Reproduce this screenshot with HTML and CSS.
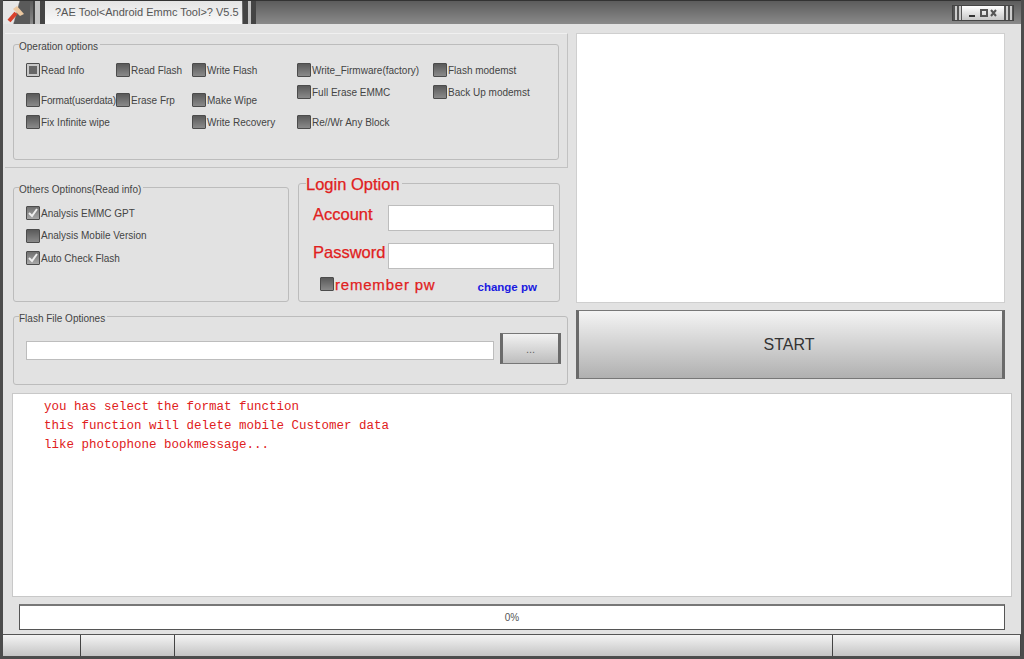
FILE: index.html
```html
<!DOCTYPE html>
<html lang="en">

<head>
    <meta charset="UTF-8">
    <title>AE Tool</title>
    <link rel="stylesheet" href="styles.css">
</head>

<body>
    <div class="window">

        <div class="titlebar">
            <div class="app-icon">
                <svg width="27" height="23" viewBox="0 0 27 23">
                    <path d="M6 20 L13 12" stroke="#d8402a" stroke-width="4" fill="none" />
                    <path d="M10 8 L14 5 L21 13 L17 15 Z" fill="#ecc8a0" />
                </svg>
            </div>
            <div class="stripes"></div>
            <div class="title-tab">?AE Tool&lt;Android Emmc Tool&gt;? V5.5</div>
            <div class="stripes after"></div>
            <div class="win-buttons">
                <div class="stripes small"></div>
                <div class="win-icons">
                    <svg width="34" height="12" viewBox="0 0 34 12">
                        <rect x="3" y="8" width="6" height="2" fill="#333" />
                        <rect x="15" y="3" width="6" height="6" fill="none" stroke="#555" stroke-width="2" />
                        <path d="M25 3 L30 9 M30 3 L25 9" stroke="#555" stroke-width="2" />
                    </svg>
                </div>
                <div class="stripes small"></div>
            </div>
        </div>

        <div class="content">
            <div class="top">
                <div class="left">
                    <div class="op-panel">
                        <div class="group op-group">
                            <span class="legend">Operation options</span>
                            <div class="op-col col1">
                                <label class="opt"><i class="box radio"></i>Read Info</label>
                                <label class="opt squeeze"><i class="box"></i>Format(userdata)</label>
                                <label class="opt"><i class="box"></i>Fix Infinite wipe</label>
                            </div>
                            <div class="op-col col2">
                                <label class="opt"><i class="box"></i>Read Flash</label>
                                <label class="opt"><i class="box"></i>Erase Frp</label>
                            </div>
                            <div class="op-col col3">
                                <label class="opt"><i class="box"></i>Write Flash</label>
                                <label class="opt"><i class="box"></i>Make Wipe</label>
                                <label class="opt"><i class="box"></i>Write Recovery</label>
                            </div>
                            <div class="op-col col4 tight">
                                <label class="opt"><i class="box"></i>Write_Firmware(factory)</label>
                                <label class="opt"><i class="box"></i>Full Erase EMMC</label>
                                <label class="opt"><i class="box"></i>Re//Wr Any Block</label>
                            </div>
                            <div class="op-col col5 tight">
                                <label class="opt"><i class="box"></i>Flash modemst</label>
                                <label class="opt"><i class="box"></i>Back Up modemst</label>
                            </div>
                        </div>
                    </div>

                    <div class="mid-row">
                        <div class="group others-group">
                            <span class="legend">Others Optinons(Read info)</span>
                            <label class="opt"><i class="box checked"><svg width="12" height="12" viewBox="0 0 12 12"><path d="M2 6 L5 9 L10 2" stroke="#eee" stroke-width="2" fill="none" /></svg></i>Analysis EMMC GPT</label>
                            <label class="opt"><i class="box"></i>Analysis Mobile Version</label>
                            <label class="opt"><i class="box checked"><svg width="12" height="12" viewBox="0 0 12 12"><path d="M2 6 L5 9 L10 2" stroke="#eee" stroke-width="2" fill="none" /></svg></i>Auto Check Flash</label>
                        </div>
                        <div class="group login-group">
                            <span class="legend login-legend">Login Option</span>
                            <div class="login-row">
                                <span class="login-label">Account</span>
                                <input type="text" class="field login-field">
                            </div>
                            <div class="login-row">
                                <span class="login-label">Password</span>
                                <input type="text" class="field login-field">
                            </div>
                            <div class="login-foot">
                                <label class="remember"><i class="box"></i>remember pw</label>
                                <span class="change-pw">change pw</span>
                            </div>
                        </div>
                    </div>

                    <div class="group flash-group">
                        <span class="legend">Flash File Optiones</span>
                        <input type="text" class="field flash-field">
                        <button class="browse">...</button>
                    </div>
                </div>

                <div class="right">
                    <div class="output"></div>
                    <button class="start">START</button>
                </div>
            </div>

            <div class="log">
                <div>you has select the format function</div>
                <div>this function will delete mobile Customer data</div>
                <div>like photophone bookmessage...</div>
            </div>

            <div class="progress">0%</div>
        </div>

        <div class="statusbar">
            <div class="cell c1"></div>
            <div class="cell c2"></div>
            <div class="cell c3"></div>
            <div class="cell c4"></div>
        </div>
    </div>
</body>

</html>
```

FILE: styles.css
```css
* {
    box-sizing: border-box;
}

body {
    margin: 0;
    font-family: 'Liberation Sans', Arial, sans-serif;
    font-size: 10px;
    color: #444;
    background-color: #e2e2e2;
}

.window {
    width: 1024px;
    height: 659px;
    display: flex;
    flex-direction: column;
    background-color: #e2e2e2;
    border-left: 3px solid #4c4c4c;
    border-right: 3px solid #4c4c4c;
    border-bottom: 3px solid #4c4c4c;
}

/* title bar */
.titlebar {
    flex: none;
    height: 24px;
    display: flex;
    align-items: stretch;
    background: linear-gradient(#5c5c5c, #8a8a8a);
    border-top: 1px solid #333;
}

.app-icon {
    width: 27px;
    background: linear-gradient(105deg, #e6e6e6 48%, #5a5a5a 52%);
    display: flex;
    align-items: center;
    justify-content: center;
}

.stripes {
    width: 12px;
    margin-left: 3px;
    background: linear-gradient(90deg, #444 0, #444 2px, #c4c4c4 2px, #c4c4c4 7px, #444 7px, #444 12px);
}

.stripes.after {
    width: 13px;
    margin-left: 1px;
    background: linear-gradient(90deg, #444 0, #444 5px, #c4c4c4 5px, #c4c4c4 8px, #444 8px, #444 13px);
}

.title-tab {
    width: 197px;
    background: linear-gradient(#e4e4e4, #fafafa);
    color: #555;
    font-size: 11px;
    line-height: 23px;
    padding-left: 10px;
    white-space: nowrap;
}

.win-buttons {
    margin-left: auto;
    margin-right: 7px;
    margin-top: 4px;
    margin-bottom: 3px;
    width: 62px;
    display: flex;
    background: linear-gradient(#fff, #c8c8c8);
    border: 1px solid #444;
}

.stripes.small {
    width: 9px;
    margin-left: 0;
    background: repeating-linear-gradient(90deg, #555 0, #555 2px, #ccc 2px, #ccc 4px);
}

.win-icons {
    flex: 1;
    display: flex;
    align-items: center;
    justify-content: center;
}

/* main area */
.content {
    flex: 1;
    display: flex;
    flex-direction: column;
    padding-top: 9px;
}

.top {
    display: flex;
    gap: 8px;
    padding-left: 2px;
}

.left {
    width: 563px;
}

.op-panel {
    height: 135px;
    padding: 10px 8px 8px 8px;
    border: 1px solid #c2c2c2;
    border-left: none;
    border-top-color: #f0f0f0;
}

.group {
    position: relative;
    border: 1px solid #bcbcbc;
    border-radius: 3px;
}

.legend {
    position: absolute;
    top: -5px;
    left: 5px;
    padding-right: 2px;
    background-color: #e2e2e2;
    line-height: 13px;
}

.op-group {
    height: 116px;
}

.op-col {
    position: absolute;
    top: 18px;
    display: grid;
    grid-template-rows: 30px 22px 14px;
}

.op-col.tight {
    grid-template-rows: 22px 30px 14px;
}

.col1 { left: 12px; }
.col2 { left: 102px; }
.col3 { left: 178px; }
.col4 { left: 283px; }
.col5 { left: 419px; }

.opt {
    display: flex;
    align-items: center;
    height: 14px;
    gap: 1px;
    white-space: nowrap;
}

.opt.squeeze {
    letter-spacing: -0.15px;
}

.box {
    flex: none;
    display: flex;
    align-items: center;
    justify-content: center;
    width: 14px;
    height: 14px;
    background: linear-gradient(#5a5a5a, #8a8a8a);
    border: 1px solid #4c4c4c;
    border-radius: 1px;
}

.box.radio {
    background: #666;
}

.box.radio::after {
    content: "";
    width: 8px;
    height: 8px;
    background-color: #666;
    border: 2px solid #c8c8c8;
}

.box.checked {
    background: linear-gradient(#707070, #a8a8a8);
}

.mid-row {
    display: flex;
    gap: 9px;
    margin-left: 8px;
    margin-top: 15px;
    align-items: flex-end;
}

.others-group {
    width: 276px;
    height: 115px;
    padding: 18px 0 0 12px;
    display: flex;
    flex-direction: column;
    gap: 8.5px;
}

.login-group {
    width: 262px;
    height: 119px;
    padding-top: 21px;
}

.login-legend {
    top: -10px;
    left: 7px;
    color: #e02020;
    font-size: 16.5px;
    line-height: 20px;
    -webkit-text-stroke: 0.25px #e02020;
}

.login-row {
    display: flex;
    align-items: center;
    height: 26px;
    margin-bottom: 12px;
}

.login-label {
    width: 89px;
    padding-left: 14px;
    padding-bottom: 8px;
    color: #e02020;
    font-size: 16.5px;
    white-space: nowrap;
    -webkit-text-stroke: 0.25px #e02020;
}

.field {
    display: block;
    margin: 0;
    padding: 0;
    background-color: #fff;
    border: 1px solid #bdbdbd;
}

.login-field {
    width: 166px;
    height: 26px;
}

.login-foot {
    display: flex;
    align-items: center;
    padding-left: 21px;
    margin-top: -6px;
}

.remember {
    display: flex;
    align-items: center;
    gap: 1px;
    color: #e02020;
    font-size: 15px;
    letter-spacing: 0.8px;
    -webkit-text-stroke: 0.25px #e02020;
}

.change-pw {
    margin-left: 42px;
    margin-top: 6px;
    color: #1a1ae0;
    font-size: 11.5px;
    font-weight: bold;
}

.flash-group {
    height: 69px;
    margin-left: 8px;
    margin-top: 14px;
    display: flex;
    align-items: center;
    padding-left: 12px;
}

.flash-field {
    width: 468px;
    height: 19px;
}

.browse {
    width: 61px;
    height: 31px;
    margin-left: 6px;
    margin-bottom: 4px;
    padding: 0;
    background: linear-gradient(#f2f2f2, #bdbdbd);
    border: none;
    border-left: 3px solid #6a6a6a;
    border-right: 3px solid #6a6a6a;
    border-top: 1px solid #777;
    border-bottom: 1px solid #777;
    color: #666;
    font-family: 'Liberation Sans', Arial, sans-serif;
    font-size: 11px;
}

.right {
    width: 429px;
    display: flex;
    flex-direction: column;
    gap: 7px;
}

.output {
    height: 270px;
    background-color: #fff;
    border: 1px solid #cfcfcf;
}

.start {
    height: 69px;
    padding: 0 3px 0 0;
    background: linear-gradient(#f4f4f4, #b0b0b0);
    border: none;
    border-left: 3px solid #6a6a6a;
    border-right: 3px solid #6a6a6a;
    border-top: 1px solid #777;
    border-bottom: 1px solid #777;
    color: #333;
    font-family: 'Liberation Sans', Arial, sans-serif;
    font-size: 16px;
}

.log {
    height: 204px;
    margin: 8px 9px 0 9px;
    padding: 4px 0 0 31px;
    background-color: #fff;
    border: 1px solid #c8c8c8;
    color: #e02020;
    font-family: 'Liberation Mono', monospace;
    font-size: 12.5px;
    line-height: 19px;
}

.progress {
    height: 26px;
    margin: 7px 16px 0 16px;
    background-color: #fff;
    border: 1px solid #555;
    border-top: 2px solid #777;
    text-align: center;
    line-height: 23px;
    color: #555;
}

.statusbar {
    flex: none;
    height: 22px;
    margin-top: 4px;
    display: flex;
    border-top: 1px solid #555;
}

.cell {
    background: linear-gradient(#f4f4f4, #c4c4c4);
    border-right: 1px solid #444;
}

.c1 { width: 78px; }
.c2 { width: 94px; }
.c3 { width: 658px; }
.c4 { flex: 1; }
```
